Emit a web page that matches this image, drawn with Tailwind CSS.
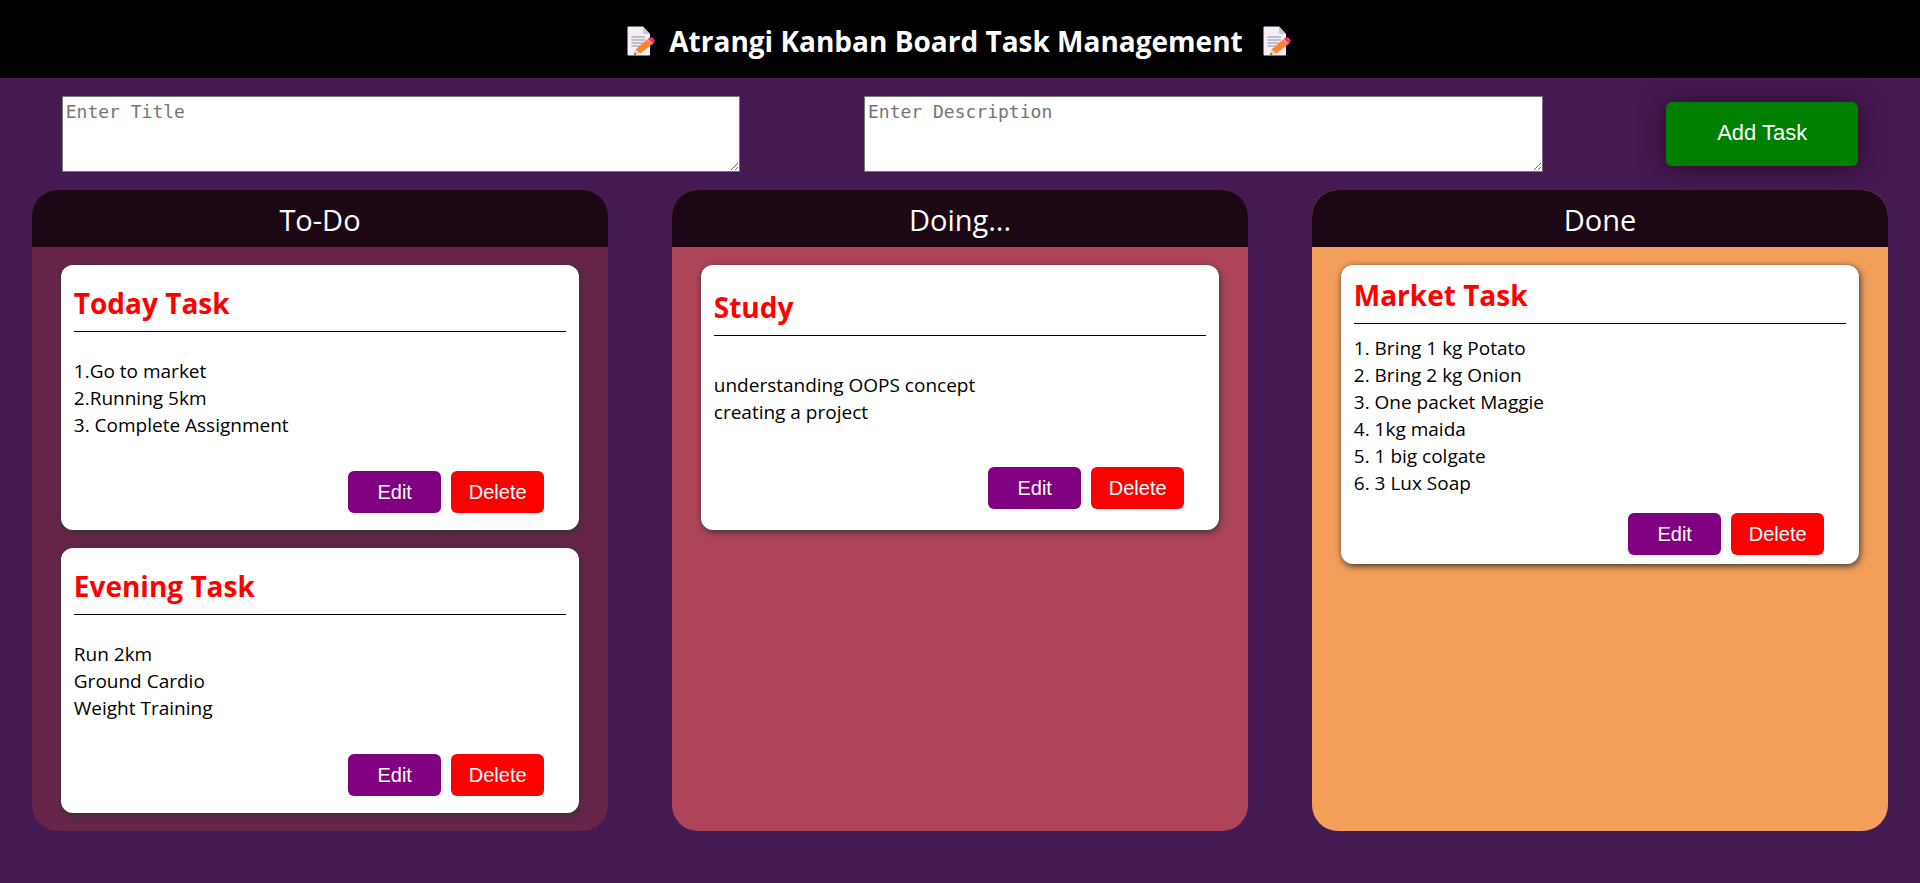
<!DOCTYPE html>
<html lang="en">
<head>
<meta charset="utf-8">
<meta name="viewport" content="width=device-width, initial-scale=1">
<title>Atrangi Kanban Board</title>
<script src="https://cdn.jsdelivr.net/npm/@tailwindcss/browser@4"></script>
</head>
<body class="min-h-screen bg-[#451952] font-['Open_Sans','Noto_Sans',sans-serif] text-black">

<svg class="hidden" aria-hidden="true">
  <symbol id="memo" viewBox="0 0 30 30">
    <path d="M1.5 .5H16L23 8V28.5Q23 29.5 22 29.5H1.5Q.5 29.5 .5 28.500V1.500Q.5 .5 1.500 .5Z" fill="#f3eef8"/>
    <path d="M16 .5V7Q16 8 17 8H23Z" fill="#cdc4d6"/>
    <path d="M4.500 11H18M4.500 14H18M4.500 17H16M4.500 20H13" stroke="#b4acbc" stroke-width="1.3"/>
    <path d="M8.500 23.500L20 13.500L25 18.500L13 27.500Z" fill="#ff822d"/>
    <path d="M8.500 23.500L13 27.500L7 29Z" fill="#ffce7c"/>
    <path d="M8 26.500L9 28.500L7 29Z" fill="#402a32"/>
    <path d="M20 13.500L21.500 12.300L26.500 17.300L25 18.500Z" fill="#d3a3b3"/>
    <path d="M21 12.700Q24 10 26.500 12.500Q29 15 26 17.700Z" fill="#ff2a68"/>
  </symbol>
</svg>

<header class="flex h-[78px] items-center justify-center bg-black pt-1 text-white">
  <svg class="mr-3 size-[30px]" aria-hidden="true"><use href="#memo"/></svg>
  <h1 class="text-[28px] font-bold">Atrangi Kanban Board Task Management</h1>
  <svg class="ml-5 size-[30px]" aria-hidden="true"><use href="#memo"/></svg>
</header>

<form class="flex items-center justify-around py-[18px]">
  <textarea aria-label="Title" placeholder="Enter Title" class="block h-[76px] w-[35.35%] border border-[#767676] bg-white px-[3px] py-[3px] font-['DejaVu_Sans_Mono',monospace] text-[18px] leading-6 placeholder:text-[#757575]"></textarea>
  <textarea aria-label="Description" placeholder="Enter Description" class="block h-[76px] w-[35.35%] border border-[#767676] bg-white px-[3px] py-[3px] font-['DejaVu_Sans_Mono',monospace] text-[18px] leading-6 placeholder:text-[#757575]"></textarea>
  <button type="button" class="h-16 w-1/10 rounded-md bg-[#008000] pb-[3px] font-['Liberation_Sans',sans-serif] text-[22px] text-white shadow-[0_2px_24px_#2b0a2a]">Add Task</button>
</form>

<main class="flex items-stretch justify-around">
  <section class="w-3/10 overflow-hidden rounded-[26px] bg-[#662549] pb-[18px]">
    <h2 class="bg-[#1c0715] pt-[10px] pb-[7px] text-center text-[29px] leading-10 text-white">To-Do</h2>
    <article class="mx-auto mt-[18px] flex min-h-[265px] w-9/10 flex-col justify-around rounded-xl bg-white px-[13px] pt-[10px] pb-[9px] shadow-[1px_2px_7px_#333]">
      <h3 class="border-b border-black pb-2 text-[28px] leading-10 font-bold text-[#ff0000]">Today Task</h3>
      <p class="pt-[11px] pb-4 text-[19px] leading-[27px]">1.Go to market<br>2.Running 5km<br>3. Complete Assignment</p>
      <div class="flex justify-end gap-[10px] pr-[22px] font-['Liberation_Sans',sans-serif] text-[20px] text-white">
        <button type="button" class="h-[42px] w-[93px] rounded-md bg-[#800080]">Edit</button>
        <button type="button" class="h-[42px] w-[93px] rounded-md bg-[#ff0000]">Delete</button>
      </div>
    </article>
    <article class="mx-auto mt-[18px] flex min-h-[265px] w-9/10 flex-col justify-around rounded-xl bg-white px-[13px] pt-[10px] pb-[9px] shadow-[1px_2px_7px_#333]">
      <h3 class="border-b border-black pb-2 text-[28px] leading-10 font-bold text-[#ff0000]">Evening Task</h3>
      <p class="pt-[11px] pb-4 text-[19px] leading-[27px]">Run 2km<br>Ground Cardio<br>Weight Training</p>
      <div class="flex justify-end gap-[10px] pr-[22px] font-['Liberation_Sans',sans-serif] text-[20px] text-white">
        <button type="button" class="h-[42px] w-[93px] rounded-md bg-[#800080]">Edit</button>
        <button type="button" class="h-[42px] w-[93px] rounded-md bg-[#ff0000]">Delete</button>
      </div>
    </article>
  </section>

  <section class="w-3/10 overflow-hidden rounded-[26px] bg-[#ae445a] pb-[18px]">
    <h2 class="bg-[#1c0715] pt-[10px] pb-[7px] text-center text-[29px] leading-10 text-white">Doing...</h2>
    <article class="mx-auto mt-[18px] flex min-h-[265px] w-9/10 flex-col justify-around rounded-xl bg-white px-[13px] pt-[10px] pb-[9px] shadow-[1px_2px_7px_#333]">
      <h3 class="border-b border-black pb-2 text-[28px] leading-10 font-bold text-[#ff0000]">Study</h3>
      <p class="pt-[11px] pb-4 text-[19px] leading-[27px]">understanding OOPS concept<br>creating a project</p>
      <div class="flex justify-end gap-[10px] pr-[22px] font-['Liberation_Sans',sans-serif] text-[20px] text-white">
        <button type="button" class="h-[42px] w-[93px] rounded-md bg-[#800080]">Edit</button>
        <button type="button" class="h-[42px] w-[93px] rounded-md bg-[#ff0000]">Delete</button>
      </div>
    </article>
  </section>

  <section class="w-3/10 overflow-hidden rounded-[26px] bg-[#f39f5a] pb-[18px]">
    <h2 class="bg-[#1c0715] pt-[10px] pb-[7px] text-center text-[29px] leading-10 text-white">Done</h2>
    <article class="mx-auto mt-[18px] flex min-h-[265px] w-9/10 flex-col justify-around rounded-xl bg-white px-[13px] pt-[10px] pb-[9px] shadow-[1px_2px_7px_#333]">
      <h3 class="border-b border-black pb-2 text-[28px] leading-10 font-bold text-[#ff0000]">Market Task</h3>
      <p class="pt-[11px] pb-4 text-[19px] leading-[27px]">1. Bring 1 kg Potato<br>2. Bring 2 kg Onion<br>3. One packet Maggie<br>4. 1kg maida<br>5. 1 big colgate<br>6. 3 Lux Soap</p>
      <div class="flex justify-end gap-[10px] pr-[22px] font-['Liberation_Sans',sans-serif] text-[20px] text-white">
        <button type="button" class="h-[42px] w-[93px] rounded-md bg-[#800080]">Edit</button>
        <button type="button" class="h-[42px] w-[93px] rounded-md bg-[#ff0000]">Delete</button>
      </div>
    </article>
  </section>
</main>
</body>
</html>
